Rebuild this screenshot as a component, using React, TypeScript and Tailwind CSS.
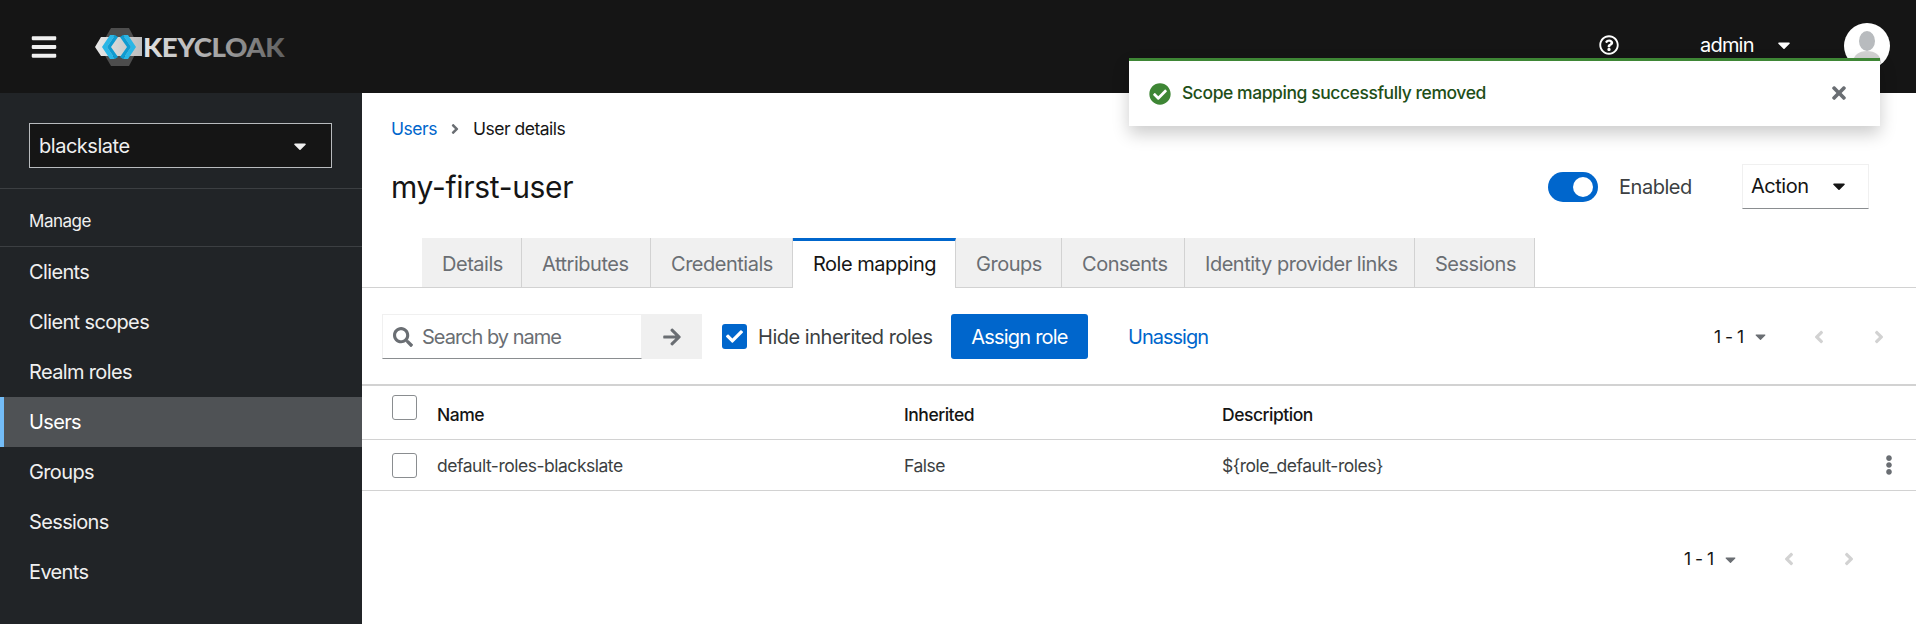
import { FaBars, FaCaretDown, FaCheckCircle, FaTimes, FaRegQuestionCircle, FaSearch, FaArrowRight, FaAngleLeft, FaAngleRight, FaEllipsisV, FaCheck } from "react-icons/fa";

const navItems = ["Clients", "Client scopes", "Realm roles", "Users", "Groups", "Sessions", "Events"];

const tabs = [
  { label: "Details", w: "w-[100px]" },
  { label: "Attributes", w: "w-[129px]" },
  { label: "Credentials", w: "w-[142px]" },
  { label: "Role mapping", w: "w-[163px]", active: true },
  { label: "Groups", w: "w-[106px]" },
  { label: "Consents", w: "w-[123px]" },
  { label: "Identity provider links", w: "w-[230px]" },
  { label: "Sessions", w: "w-[120px]" },
];

function Logo() {
  return (
    <svg width="192" height="40" viewBox="0 0 192 40" className="block">
      <defs>
        <linearGradient id="kc-text" x1="0" x2="1" y1="0" y2="0">
          <stop offset="0" stopColor="#e4e4e4" />
          <stop offset="0.5" stopColor="#a8a8a8" />
          <stop offset="1" stopColor="#5f5f5f" />
        </linearGradient>
        <linearGradient id="kc-band" x1="0" x2="1" y1="0" y2="0">
          <stop offset="0" stopColor="#e8e8e8" />
          <stop offset="1" stopColor="#bdbdbd" />
        </linearGradient>
      </defs>
      <polygon points="5,20 16,1 34,1 44,20 34,39 16,39" fill="#4d4d4d" />
      <polygon points="0,20 6,10 47,10 47,29 6,29" fill="url(#kc-band)" />
      <polygon points="15,8 20,8 12,20 20,32 15,32 7,20" fill="#29b6e6" />
      <polygon points="20,8 23,10 16,20 23,30 20,32 12,20" fill="#0f9bd1" />
      <polygon points="33,8 28,8 36,20 28,32 33,32 41,20" fill="#29b6e6" />
      <polygon points="28,8 25,10 32,20 25,30 28,32 36,20" fill="#0f9bd1" />
      <text x="48" y="30" textLength="141" lengthAdjust="spacingAndGlyphs" fontFamily="Lato, sans-serif" fontWeight="900" fontSize="27" fill="url(#kc-text)">KEYCLOAK</text>
    </svg>
  );
}

function Avatar() {
  return (
    <svg width="46" height="46" viewBox="0 0 46 46" className="block">
      <circle cx="23" cy="23" r="23" fill="#fff" />
      <ellipse cx="23" cy="18" rx="8" ry="10" fill="#b8bbbe" />
      <path d="M9 40c0-8 6-12 14-12s14 4 14 12a23 23 0 0 1-28 0z" fill="#d2d2d2" />
    </svg>
  );
}

function Checkbox({ checked }: { checked?: boolean }) {
  return checked ? (
    <span className="flex h-[25px] w-[25px] items-center justify-center rounded-[3px] bg-[#06c] text-white">
      <FaCheck className="size-[17px]" />
    </span>
  ) : (
    <span className="block h-[25px] w-[25px] rounded-[3px] border border-[#8a8d90] bg-white" />
  );
}

function Pagination({ className }: { className: string }) {
  return (
    <div className={`flex items-center ${className}`}>
      <span className="w-[38px] text-[17.5px] leading-none text-[#151515] whitespace-pre">1 - 1</span>
      <FaCaretDown className="size-[17px] text-[#6a6e73]" />
      <FaAngleLeft className="ml-[40px] size-[20px] text-[#d2d2d2]" />
      <FaAngleRight className="ml-[40px] size-[20px] text-[#d2d2d2]" />
    </div>
  );
}

export default function App() {
  return (
    <div className="relative flex h-[624px] w-full flex-col overflow-hidden bg-white font-['Inter',sans-serif] tracking-[-0.03em]">
      <header className="flex h-[93px] shrink-0 items-center bg-[#151515] text-white">
        <FaBars className="ml-[30px] size-[28px] text-[#f0f0f0]" />
        <div className="ml-[37px]">
          <Logo />
        </div>
        <div className="ml-auto -mt-[3px] flex items-center">
          <FaRegQuestionCircle className="size-[20px]" />
          <span className="ml-[81px] w-[54px] text-[20px] leading-none tracking-[-0.04em]">admin</span>
          <FaCaretDown className="ml-[20px] size-[20px]" />
          <div className="ml-[50px] mr-[26px] mt-[1px]">
            <Avatar />
          </div>
        </div>
      </header>

      <div className="flex min-h-0 flex-1">
        <aside className="w-[362px] shrink-0 bg-[#212427] text-[#f0f0f0]">
          <div className="border-b border-[#3c3f42] px-[29px] pt-[30px] pb-[20px]">
            <div className="flex h-[45px] w-[303px] items-center justify-between border border-[#b8bbbe] bg-[#151515] pl-[9px] pr-[21px] text-[20px]">
              <span>blackslate</span>
              <FaCaretDown className="size-[20px]" />
            </div>
          </div>
          <div className="flex h-[58px] items-center border-b border-[#3c3f42] px-[29px] pt-[9px] text-[17px]">Manage</div>
          <nav className="tracking-[-0.04em]">
            {navItems.map((item) => (
              <div
                key={item}
                className={
                  item === "Users"
                    ? "flex h-[50px] items-center border-l-4 border-[#73bcf7] bg-[#4f5255] pl-[25px] text-[20px] text-white"
                    : "flex h-[50px] items-center pl-[29px] text-[20px]"
                }
              >
                {item}
              </div>
            ))}
          </nav>
        </aside>

        <main className="min-w-0 flex-1">
          <div className="flex h-[24px] items-center gap-[10px] pl-[29px] mt-[24px] text-[17.5px] text-[#151515]">
            <span className="text-[#06c]">Users</span>
            <FaAngleRight className="size-[16px] text-[#6a6e73]" />
            <span>User details</span>
          </div>

          <div className="mt-[21px] flex h-[50px] items-center pl-[29px]">
            <h1 className="text-[30px] leading-none tracking-[-0.01em] text-[#151515]">my-first-user</h1>
            <div className="ml-auto flex items-center">
              <span className="flex h-[30px] w-[50px] items-center justify-end rounded-full bg-[#06c] pr-[5px]">
                <span className="size-[20px] rounded-full bg-white" />
              </span>
              <span className="ml-[21px] w-[123px] text-[20px] text-[#3c3f42]">Enabled</span>
              <div className="mr-[47px] mb-[2px] flex h-[45px] w-[127px] items-center justify-between border border-[#f0f0f0] border-b-[#8a8d90] pl-[8px] pr-[19px] text-[20px] text-[#151515]">
                <span>Action</span>
                <FaCaretDown className="size-[20px]" />
              </div>
            </div>
          </div>

          <div className="mt-[26px] flex h-[50px] border-b border-[#d2d2d2] pl-[60px]">
            {tabs.map((tab) => (
              <div
                key={tab.label}
                className={
                  tab.active
                    ? `${tab.w} h-[50px] border-t-[3px] border-r border-t-[#06c] border-r-[#d2d2d2] bg-white pl-[20px] pt-[8px] text-[20px] text-[#151515]`
                    : `${tab.w} h-[49px] border-r border-[#d2d2d2] bg-[#f0f0f0] pl-[20px] pt-[11px] text-[20px] text-[#6a6e73]`
                }
              >
                {tab.label}
              </div>
            ))}
          </div>

          <div className="mt-[26px] flex h-[45px] items-center pl-[20px]">
            <div className="flex h-[45px] w-[260px] items-center gap-[9px] border border-[#f0f0f0] border-b-[#8a8d90] pl-[10px] text-[20px] tracking-[-0.05em] text-[#6a6e73]">
              <FaSearch className="size-[20px]" />
              <span>Search by name</span>
            </div>
            <div className="flex h-[45px] w-[60px] items-center justify-center bg-[#f0f0f0] text-[#6a6e73]">
              <FaArrowRight className="size-[20px]" />
            </div>
            <div className="ml-[20px]">
              <Checkbox checked />
            </div>
            <span className="ml-[11px] w-[173px] whitespace-nowrap text-[20px] text-[#3c3f42]">Hide inherited roles</span>
            <button className="ml-[20px] h-[45px] w-[137px] rounded-[3px] bg-[#06c] text-[20px] tracking-[-0.04em] text-white">Assign role</button>
            <span className="ml-[40px] text-[20px] tracking-[-0.05em] text-[#06c]">Unassign</span>
            <Pagination className="ml-auto mr-[27px]" />
          </div>

          <div className="mt-[25px] border-t-2 border-[#d2d2d2]">
            <div className="grid h-[54px] grid-cols-[45px_467px_318px_1fr] items-center border-b border-[#d2d2d2] pl-[30px] text-[17.5px] font-medium text-[#151515]">
              <span className="-mt-[11px]">
                <Checkbox />
              </span>
              <span className="pt-[5px]">Name</span>
              <span className="pt-[5px]">Inherited</span>
              <span className="pt-[5px]">Description</span>
            </div>
            <div className="grid h-[51px] grid-cols-[45px_467px_318px_1fr_37px] items-center border-b border-[#d2d2d2] pl-[30px] text-[17.5px] text-[#3c3f42]">
              <span className="mt-[1px]">
                <Checkbox />
              </span>
              <span className="pt-[3px]">default-roles-blackslate</span>
              <span className="pt-[3px]">False</span>
              <span className="pt-[3px]">{"${role_default-roles}"}</span>
              <FaEllipsisV className="size-[20px] text-[#6a6e73]" />
            </div>
          </div>

          <Pagination className="mt-[58px] justify-end mr-[57px]" />
        </main>
      </div>

      <div className="absolute left-[1129px] top-[58px] flex h-[68px] w-[751px] items-center border-t-[3px] border-[#3e8635] bg-white pl-[20px] pr-[31px] shadow-[0_8px_16px_rgba(3,3,3,0.2)]">
        <FaCheckCircle className="size-[22px] text-[#3e8635]" />
        <span className="ml-[11px] text-[17.5px] font-medium tracking-[-0.025em] text-[#1e4f18]">Scope mapping successfully removed</span>
        <FaTimes className="ml-auto mb-[2px] size-[20px] text-[#6a6e73]" />
      </div>
    </div>
  );
}
